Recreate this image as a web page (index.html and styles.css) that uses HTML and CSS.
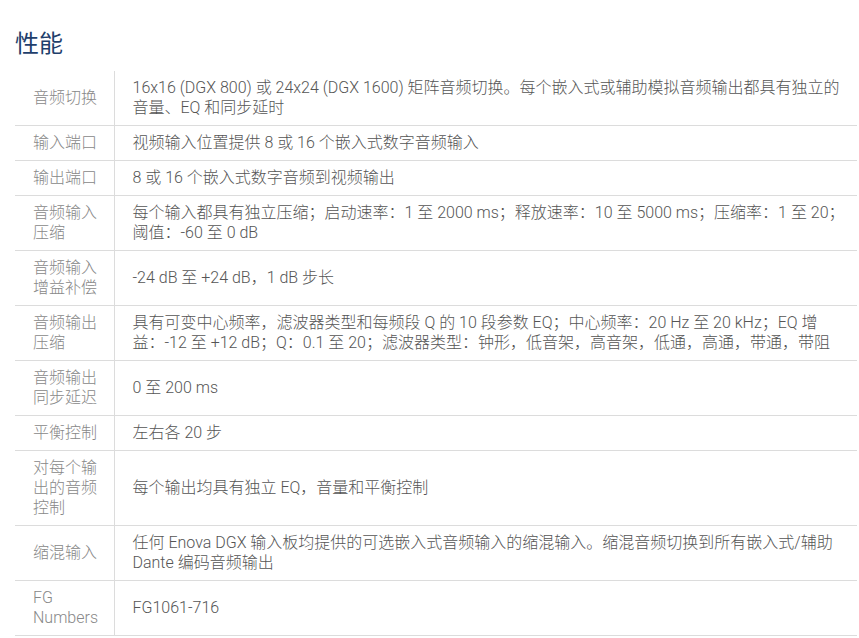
FILE: index.html
```html
<!DOCTYPE html>
<html lang="zh-CN">
<head>
    <meta charset="UTF-8">
    <title>性能</title>
    <link rel="stylesheet" href="styles.css">
</head>
<body>
    <div class="specs">
        <h2>性能</h2>
        <table class="spec-table">
            <tr>
                <th>音频切换</th>
                <td>16x16 (DGX 800) 或 24x24 (DGX 1600) 矩阵音频切换。每个嵌入式或辅助模拟音频输出都具有独立的音量、EQ 和同步延时</td>
            </tr>
            <tr>
                <th>输入端口</th>
                <td>视频输入位置提供 8 或 16 个嵌入式数字音频输入</td>
            </tr>
            <tr>
                <th>输出端口</th>
                <td>8 或 16 个嵌入式数字音频到视频输出</td>
            </tr>
            <tr>
                <th>音频输入压缩</th>
                <td>每个输入都具有独立压缩；启动速率：1 至 2000 ms；释放速率：10 至 5000 ms；压缩率：1 至 20；阈值：-60 至 0 dB</td>
            </tr>
            <tr>
                <th>音频输入增益补偿</th>
                <td>-24 dB 至 +24 dB，1 dB 步长</td>
            </tr>
            <tr>
                <th>音频输出压缩</th>
                <td>具有可变中心频率，滤波器类型和每频段 Q 的 10 段参数 EQ；中心频率：20 Hz 至 20 kHz；EQ 增益：-12 至 +12 dB；Q：0.1 至 20；滤波器类型：钟形，低音架，高音架，低通，高通，带通，带阻</td>
            </tr>
            <tr>
                <th>音频输出同步延迟</th>
                <td>0 至 200 ms</td>
            </tr>
            <tr>
                <th>平衡控制</th>
                <td>左右各 20 步</td>
            </tr>
            <tr>
                <th>对每个输出的音频控制</th>
                <td>每个输出均具有独立 EQ，音量和平衡控制</td>
            </tr>
            <tr>
                <th>缩混输入</th>
                <td>任何 Enova DGX 输入板均提供的可选嵌入式音频输入的缩混输入。缩混音频切换到所有嵌入式/辅助 Dante 编码音频输出</td>
            </tr>
            <tr>
                <th>FG Numbers</th>
                <td>FG1061-716</td>
            </tr>
        </table>
    </div>
</body>
</html>
```

FILE: styles.css
```css
* {
    box-sizing: border-box;
}

body {
    margin: 0;
    background-color: #fff;
    font-family: Roboto, "Noto Sans CJK SC", sans-serif;
    font-weight: 300;
}

.specs {
    padding-left: 15px;
    width: 857px;
}

h2 {
    margin: 30px 0 13px;
    font-size: 24px;
    line-height: 28px;
    font-weight: 400;
    color: #1f3f6c;
}

.spec-table {
    width: 100%;
    border-collapse: collapse;
    font-size: 16px;
    line-height: 20px;
}

.spec-table tr {
    border-bottom: 1px solid #dcdcdc;
}

.spec-table th {
    width: 99px;
    padding: 7px 12px 7px 18px;
    text-align: left;
    font-weight: 300;
    color: #888;
    border-right: 1px solid #dcdcdc;
}

.spec-table td {
    padding: 7px 12px 7px 18px;
    color: #555;
}
```
